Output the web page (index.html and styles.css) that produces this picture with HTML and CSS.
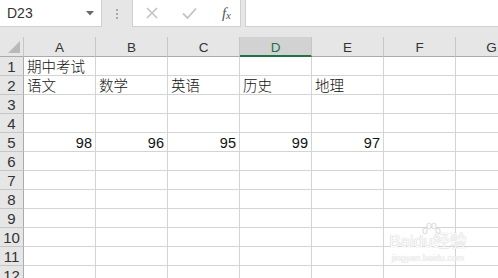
FILE: index.html
```html
<!DOCTYPE html>
<html lang="zh">
<head>
<meta charset="utf-8">
<link rel="stylesheet" href="styles.css">
</head>
<body>
<div class="app">
  <div class="toolbar">
    <div class="namebox">
      <span class="name">D23</span>
      <svg class="caret" width="8" height="5" viewBox="0 0 8 5"><path d="M0 0H8L4 4.5Z" fill="#6a6a6a"/></svg>
    </div>
    <div class="grip"><span></span><span></span><span></span></div>
    <div class="fxbox">
      <svg class="icon" width="12" height="12" viewBox="0 0 12 12"><path d="M1 1L11 11M11 1L1 11" stroke="#c4c4c4" stroke-width="1.6" fill="none"/></svg>
      <svg class="icon" width="15" height="12" viewBox="0 0 15 12"><path d="M1 6.5L5.5 11L14 1.5" stroke="#c4c4c4" stroke-width="1.8" fill="none"/></svg>
      <span class="fx">f<sub>x</sub></span>
    </div>
    <div class="formula"></div>
  </div>

  <div class="sheet">
    <div class="hd corner"><svg width="12" height="12" viewBox="0 0 12 12"><path d="M12 0V12H0Z" fill="#b9b9b9"/></svg></div>
    <div class="hd col">A</div>
    <div class="hd col">B</div>
    <div class="hd col">C</div>
    <div class="hd col sel">D</div>
    <div class="hd col">E</div>
    <div class="hd col">F</div>
    <div class="hd col">G</div>

    <div class="rh">1</div><div class="c t">期中考试</div><div class="c"></div><div class="c"></div><div class="c"></div><div class="c"></div><div class="c"></div><div class="c"></div>
    <div class="rh">2</div><div class="c t">语文</div><div class="c t">数学</div><div class="c t">英语</div><div class="c t">历史</div><div class="c t">地理</div><div class="c"></div><div class="c"></div>
    <div class="rh">3</div><div class="c"></div><div class="c"></div><div class="c"></div><div class="c"></div><div class="c"></div><div class="c"></div><div class="c"></div>
    <div class="rh">4</div><div class="c"></div><div class="c"></div><div class="c"></div><div class="c"></div><div class="c"></div><div class="c"></div><div class="c"></div>
    <div class="rh">5</div><div class="c n">98</div><div class="c n">96</div><div class="c n">95</div><div class="c n">99</div><div class="c n">97</div><div class="c"></div><div class="c"></div>
    <div class="rh">6</div><div class="c"></div><div class="c"></div><div class="c"></div><div class="c"></div><div class="c"></div><div class="c"></div><div class="c"></div>
    <div class="rh">7</div><div class="c"></div><div class="c"></div><div class="c"></div><div class="c"></div><div class="c"></div><div class="c"></div><div class="c"></div>
    <div class="rh">8</div><div class="c"></div><div class="c"></div><div class="c"></div><div class="c"></div><div class="c"></div><div class="c"></div><div class="c"></div>
    <div class="rh">9</div><div class="c"></div><div class="c"></div><div class="c"></div><div class="c"></div><div class="c"></div><div class="c"></div><div class="c"></div>
    <div class="rh">10</div><div class="c"></div><div class="c"></div><div class="c"></div><div class="c"></div><div class="c"></div><div class="c"></div><div class="c"></div>
    <div class="rh">11</div><div class="c"></div><div class="c"></div><div class="c"></div><div class="c"></div><div class="c"></div><div class="c"></div><div class="c"></div>
    <div class="rh">12</div><div class="c"></div><div class="c"></div><div class="c"></div><div class="c"></div><div class="c"></div><div class="c"></div><div class="c"></div>
  </div>

  <div class="watermark">
    <svg class="paw" width="22" height="14" viewBox="0 0 22 14"><g fill="#fbfbfb" stroke="#d2d2d2" stroke-width="0.8"><ellipse cx="5" cy="9" rx="2.2" ry="3"/><ellipse cx="9" cy="4" rx="2.2" ry="3"/><ellipse cx="14" cy="4" rx="2.2" ry="3"/><ellipse cx="18" cy="9" rx="2.2" ry="3"/></g></svg>
    <div class="wm-logo">Bai<span class="du">du</span>经验</div>
    <div class="wm-url">jingyan.baidu.com</div>
  </div>
</div>
</body>
</html>
```

FILE: styles.css
```css
* { box-sizing: border-box; }
html, body { margin: 0; padding: 0; }
body {
  width: 498px;
  height: 278px;
  overflow: hidden;
  background: #e6e6e6;
  font-family: "Noto Sans CJK SC", "Liberation Sans", sans-serif;
  color: #222;
}
.app { position: relative; width: 498px; height: 278px; overflow: hidden; }

.toolbar {
  display: flex;
  align-items: flex-start;
  height: 37px;
}
.namebox {
  width: 102px;
  height: 27px;
  background: #fff;
  border-right: 1px solid #d0d0d0;
  border-bottom: 1px solid #d0d0d0;
  display: flex;
  align-items: center;
  justify-content: space-between;
  padding: 0 7px 0 7px;
}
.name {
  font-family: "Liberation Sans", sans-serif;
  font-size: 14px;
  color: #333;
}
.caret { margin-top: 1px; }
.grip {
  width: 30px;
  height: 27px;
  display: flex;
  flex-direction: column;
  align-items: center;
  justify-content: center;
  gap: 2px;
}
.grip span { width: 2px; height: 2px; background: #a8a8a8; }
.fxbox {
  width: 109px;
  height: 27px;
  background: #fff;
  border: 1px solid #d0d0d0;
  border-top: none;
  display: flex;
  align-items: center;
  padding: 0 9px 0 13px;
  justify-content: space-between;
}
.fx {
  font-family: "Liberation Serif", serif;
  font-style: italic;
  font-size: 15px;
  color: #555;
  line-height: 1;
}
.fx sub { font-size: 11px; vertical-align: -1px; }
.formula {
  flex: 1;
  margin-left: 4px;
  height: 27px;
  background: #fff;
  border-left: 1px solid #d0d0d0;
  border-bottom: 1px solid #d0d0d0;
}

.sheet {
  display: grid;
  grid-template-columns: 24px repeat(7, 72px);
  grid-template-rows: 20px;
  grid-auto-rows: 19px;
  width: 528px;
  background: #fff;
}
.hd {
  background: #e6e6e6;
  border-right: 1px solid #c6c6c6;
  border-bottom: 1px solid #ababab;
  display: flex;
  align-items: center;
  justify-content: center;
  font-family: "Liberation Sans", sans-serif;
  font-size: 13.5px;
  color: #333;
  padding-top: 1px;
}
.corner {
  align-items: flex-end;
  justify-content: flex-end;
  padding: 0 3px 3px 0;
}
.hd.sel {
  background: #d2d2d2;
  color: #217346;
  border-bottom: 2px solid #217346;
  padding-top: 2px;
}
.rh {
  background: #e6e6e6;
  border-right: 1px solid #ababab;
  border-bottom: 1px solid #c6c6c6;
  display: flex;
  align-items: center;
  justify-content: center;
  font-family: "Liberation Sans", sans-serif;
  font-size: 15px;
  color: #333;
  padding-top: 1px;
}
.c {
  border-right: 1px solid #d4d4d4;
  border-bottom: 1px solid #d4d4d4;
  white-space: nowrap;
  overflow: visible;
  font-size: 14.5px;
  font-weight: 300;
  line-height: 18px;
  color: #111;
}
.c.t { padding-left: 3px; }
.c.n {
  text-align: right;
  padding-right: 3px;
  font-family: "Liberation Sans", sans-serif;
  font-weight: 400;
  font-size: 14.5px;
  padding-top: 1px;
}

.watermark {
  position: absolute;
  left: 382px;
  top: 222px;
  width: 92px;
  display: flex;
  flex-direction: column;
  align-items: center;
  pointer-events: none;
}
.paw { margin-left: 6px; margin-bottom: -4px; }
.wm-logo {
  font-family: "Liberation Sans", "Noto Sans CJK SC", sans-serif;
  font-size: 17px;
  line-height: 20px;
  color: #fafafa;
  text-shadow: 0 0 1px #cfcfcf, 0 0 1px #cfcfcf;
}
.wm-url {
  font-family: "Liberation Sans", sans-serif;
  font-size: 9px;
  color: #f4f4f4;
  text-shadow: 0 0 1px #d0d0d0;
  margin-top: 1px;
}
```
